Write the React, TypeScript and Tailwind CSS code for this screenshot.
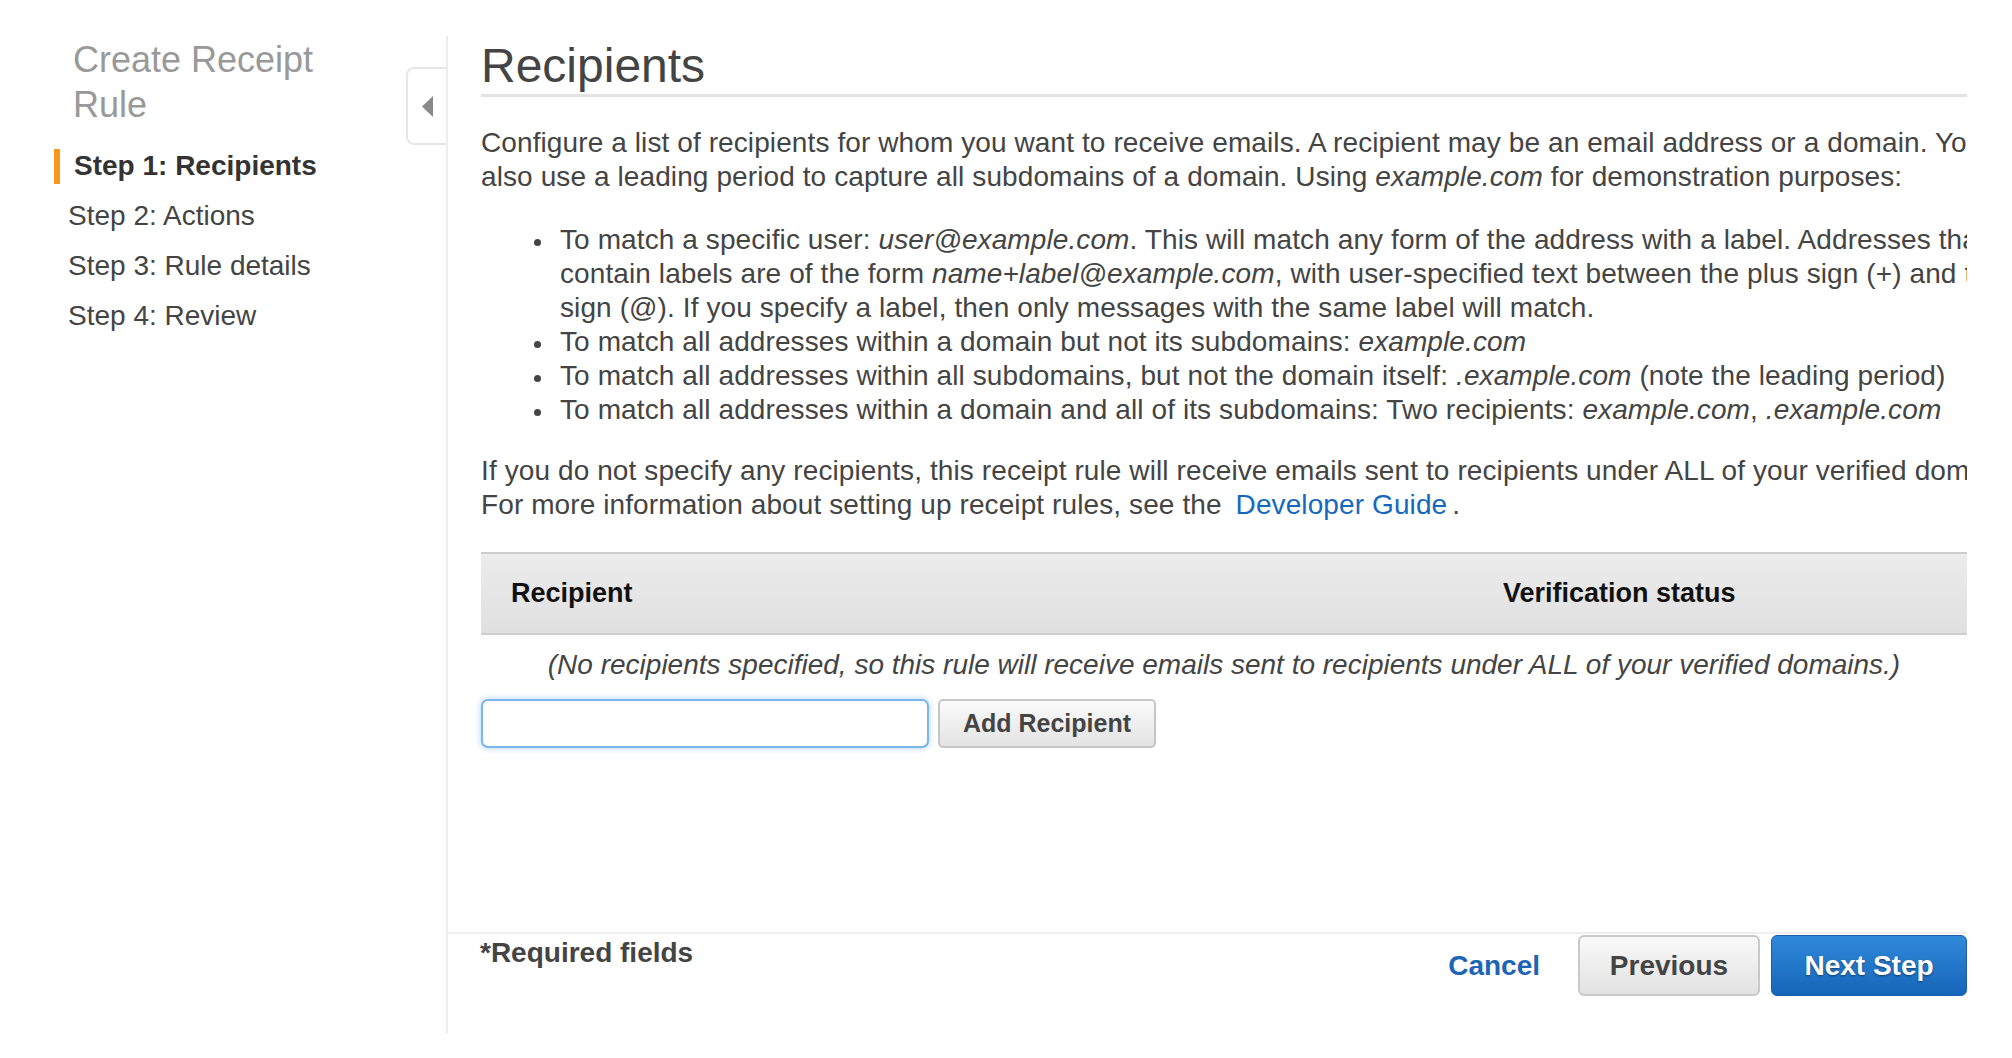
const steps = ['Step 1: Recipients', 'Step 2: Actions', 'Step 3: Rule details', 'Step 4: Review'];

const Sidebar = () => {
  return (
    <aside className="w-[446px] shrink-0 pt-[37px]">
      <h2 className="pl-[73px] text-[36px] leading-[45px] text-[#999]">
        Create Receipt
        <br />
        Rule
      </h2>
      <ul className="mt-[14px]">
        {steps.map((step, i) =>
          i === 0 ? (
            <li key={step} className="flex h-[50px] items-center">
              <span className="ml-[54px] h-[35px] w-[6px] bg-[#f7981d]" />
              <span className="pl-[14px] text-[28px] leading-[50px] font-bold text-[#333]">{step}</span>
            </li>
          ) : (
            <li key={step} className="h-[50px] pl-[68px] text-[28px] leading-[50px] text-[#444]">
              {step}
            </li>
          ),
        )}
      </ul>
    </aside>
  );
};

const Bullet = ({ children }: { children: React.ReactNode }) => (
  <li className="flex">
    <span className="w-[79px] shrink-0 pt-[16px] pl-[53px]">
      <span className="block h-[7px] w-[7px] rounded-full bg-[#444]" />
    </span>
    <span className="whitespace-nowrap">{children}</span>
  </li>
);

const Footer = () => (
  <footer className="flex h-[101px] shrink-0 justify-between border-t-2 border-[#efefef] pl-[32px]">
    <p className="pt-[2px] text-[28px] leading-[34px] font-bold text-[#444]">*Required fields</p>
    <div className="flex items-center self-start pt-px">
      <a className="mr-[38px] text-[28px] font-bold text-[#1b64b6]" href="#">
        Cancel
      </a>
      <button className="h-[61px] w-[182px] rounded-[6px] border-2 border-[#c9c9c9] bg-linear-to-b from-[#f9f9f9] to-[#e2e2e2] text-[28px] font-bold text-[#444]">
        Previous
      </button>
      <button className="ml-[11px] h-[61px] w-[196px] rounded-[6px] border border-[#1a5fa8] bg-linear-to-b from-[#3089da] to-[#1565b8] text-[28px] font-bold text-white [text-shadow:0_1px_2px_rgba(0,0,0,0.45)]">
        Next Step
      </button>
    </div>
  </footer>
);

export default function App() {
  return (
    <div className="flex h-[1058px] w-[2012px] overflow-hidden bg-white font-['Liberation_Sans',Arial,sans-serif] text-[#444]">
      <Sidebar />
      <main className="relative mt-[36px] flex h-[997px] w-[1521px] shrink-0 flex-col border-l-2 border-[#ececec]">
        {/* collapse tab sitting on the panel edge */}
        <div className="absolute top-[31px] left-[-42px] flex h-[78px] w-[40px] items-center justify-center rounded-l-[8px] border-2 border-r-0 border-[#e6e6e6] bg-white">
          <svg width="11" height="21" viewBox="0 0 11 21">
            <polygon points="11,0 11,21 0,10.5" fill="#8a8a8a" />
          </svg>
        </div>

        <div className="flex-1 overflow-hidden pl-[33px]">
          <h1 className="mt-[3px] border-b-[3px] border-[#e3e3e3] pb-[2px] text-[48px] leading-[53px] text-[#444]">
            Recipients
          </h1>

          <p className="mt-[29px] text-[28px] leading-[34px] tracking-[0.1px] whitespace-nowrap">
            Configure a list of recipients for whom you want to receive emails. A recipient may be an email address or a
            domain. You can
            <br />
            also use a leading period to capture all subdomains of a domain. Using <i>example.com</i> for demonstration
            purposes:
          </p>

          <ul className="mt-[29px] text-[28px] leading-[34px] tracking-[0.1px]">
            <Bullet>
              To match a specific user: <i>user@example.com</i>. This will match any form of the address with a label.
              Addresses that
              <br />
              contain labels are of the form <i>name+label@example.com</i>, with user-specified text between the plus
              sign (+) and the at
              <br />
              sign (@). If you specify a label, then only messages with the same label will match.
            </Bullet>
            <Bullet>
              To match all addresses within a domain but not its subdomains: <i>example.com</i>
            </Bullet>
            <Bullet>
              To match all addresses within all subdomains, but not the domain itself: <i>.example.com</i> (note the
              leading period)
            </Bullet>
            <Bullet>
              To match all addresses within a domain and all of its subdomains: Two recipients: <i>example.com</i>,{' '}
              <i>.example.com</i>
            </Bullet>
          </ul>

          <p className="mt-[27px] text-[28px] leading-[34px] tracking-[0.1px] whitespace-nowrap">
            If you do not specify any recipients, this receipt rule will receive emails sent to recipients under ALL of
            your verified domains.
            <br />
            For more information about setting up receipt rules, see the
            <a className="ml-[14px] text-[#1569bd]" href="#">
              Developer Guide
            </a>
            <span className="ml-[5px]">.</span>
          </p>

          <div className="mt-[30px] w-[1486px]">
            <div className="flex h-[83px] items-center border-y-2 border-[#cdcdcd] bg-linear-to-b from-[#ececec] to-[#e0e0e0] text-[27px] font-bold text-[#111]">
              <span className="w-[992px] pl-[30px]">Recipient</span>
              <span className="pl-[30px]">Verification status</span>
            </div>
            <p className="pt-[13px] text-center text-[28px] leading-[34px] whitespace-nowrap italic">
              (No recipients specified, so this rule will receive emails sent to recipients under ALL of your verified
              domains.)
            </p>
          </div>

          <div className="mt-[17px] flex gap-[9px]">
            <input
              type="text"
              className="h-[49px] w-[448px] rounded-[7px] border-2 border-[#7ab6ec] bg-white shadow-[0_0_6px_rgba(102,170,233,0.55)] outline-none"
            />
            <button className="h-[49px] w-[218px] rounded-[5px] border-2 border-[#c6c6c6] bg-linear-to-b from-[#fbfbfb] to-[#e3e3e3] text-[25px] font-bold text-[#444]">
              Add Recipient
            </button>
          </div>
        </div>

        <Footer />
      </main>
    </div>
  );
}
